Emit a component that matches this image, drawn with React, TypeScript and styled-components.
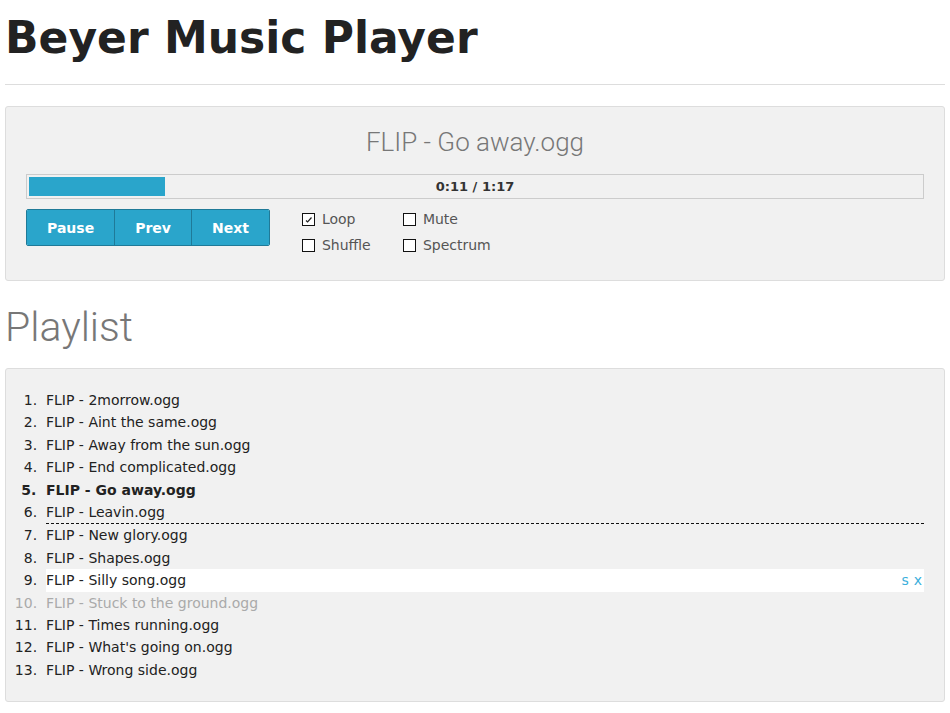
import React from "react";
import styled, { createGlobalStyle } from "styled-components";

const GlobalStyle = createGlobalStyle`
  html, body { margin: 0; padding: 0; background: #fff; }
  body { font-family: "DejaVu Sans", "Noto Sans", sans-serif; color: #222; }
`;

const Page = styled.div`
  padding: 0 5px 12px;
`;

const Title = styled.h1`
  margin: 14px 0 0;
  font-size: 44px;
  line-height: 48px;
  font-weight: bold;
  color: #222;
`;

const Divider = styled.hr`
  border: 0;
  border-top: 1px solid #ddd;
  margin: 22px 0 21px;
`;

const Panel = styled.section`
  background: #f1f1f1;
  border: 1px solid #ddd;
  border-radius: 3px;
  padding: 20px;
`;

const SongTitle = styled.div`
  text-align: center;
  font-family: Roboto, "DejaVu Sans", sans-serif;
  font-size: 26px;
  font-weight: 300;
  line-height: 30px;
  color: #777;
  margin-bottom: 17px;
`;

const Track = styled.div`
  border: 1px solid #ccc;
  padding: 2px;
  display: grid;
  height: 19px;
`;

const Fill = styled.div`
  grid-area: 1 / 1;
  height: 19px;
  background: #2aa5cb;
`;

const Time = styled.div`
  grid-area: 1 / 1;
  text-align: center;
  font-size: 13px;
  font-weight: bold;
  line-height: 19px;
  color: #333;
`;

const Controls = styled.div`
  display: flex;
  align-items: flex-start;
  gap: 32px;
  margin-top: 10px;
`;

const ButtonGroup = styled.div`
  display: flex;
  border: 1px solid #1f7a98;
  border-radius: 2px;
  overflow: hidden;
`;

const Button = styled.button`
  height: 35px;
  padding: 0 20px;
  border: 0;
  background: #2aa5cb;
  color: #fff;
  font-family: "DejaVu Sans", sans-serif;
  font-weight: bold;
  font-size: 14px;
  cursor: pointer;
  & + & {
    border-left: 1px solid #1f7a98;
  }
`;

const Checks = styled.div`
  display: grid;
  grid-template-columns: 101px auto;
  row-gap: 6px;
  padding-bottom: 5px;
`;

const CheckLabel = styled.label`
  display: flex;
  align-items: center;
  height: 20px;
  font-size: 14px;
  color: #555;
`;

const Box = styled.span`
  box-sizing: border-box;
  width: 13px;
  height: 13px;
  border: 1px solid #111;
  background: #fff;
  margin-right: 7px;
  display: flex;
  align-items: center;
  justify-content: center;
`;

const Heading = styled.h2`
  margin: 24px 0 19px;
  font-family: Roboto, "DejaVu Sans", sans-serif;
  font-size: 41px;
  line-height: 44px;
  font-weight: 300;
  color: #777;
`;

const List = styled.ol`
  margin: 0;
  padding: 0 0 0 20px;
`;

const Item = styled.li<{ $state?: "playing" | "disabled" | "hover" | "drop" }>`
  font-size: 14px;
  line-height: 22.4px;
  color: ${(p) => (p.$state === "disabled" ? "#aaa" : "#222")};
  font-weight: ${(p) => (p.$state === "playing" ? "bold" : "normal")};
  background: ${(p) => (p.$state === "hover" ? "#fff" : "transparent")};
  border-bottom: ${(p) => (p.$state === "drop" ? "1px dashed #111" : "0")};
  &::marker {
    content: counter(list-item) ".\\00a0\\00a0";
  }
`;

const Row = styled.span`
  display: flex;
  justify-content: space-between;
`;

const Actions = styled.span`
  display: flex;
  gap: 5px;
  padding-right: 2px;
  font-size: 14px;
  color: #3cb0dc;
`;

const songs = [
  "FLIP - 2morrow.ogg",
  "FLIP - Aint the same.ogg",
  "FLIP - Away from the sun.ogg",
  "FLIP - End complicated.ogg",
  "FLIP - Go away.ogg",
  "FLIP - Leavin.ogg",
  "FLIP - New glory.ogg",
  "FLIP - Shapes.ogg",
  "FLIP - Silly song.ogg",
  "FLIP - Stuck to the ground.ogg",
  "FLIP - Times running.ogg",
  "FLIP - What's going on.ogg",
  "FLIP - Wrong side.ogg",
];

const states: Record<number, "playing" | "disabled" | "hover" | "drop"> = {
  4: "playing",
  5: "drop",
  8: "hover",
  9: "disabled",
};

const Check = ({ checked, label }: { checked?: boolean; label: string }) => (
  <CheckLabel>
    <Box>
      {checked && (
        <svg width="9" height="9" viewBox="0 0 9 9">
          <path d="M2 5.5 L3.6 7 L7.5 2.5" fill="none" stroke="#222" strokeWidth="1.2" />
        </svg>
      )}
    </Box>
    {label}
  </CheckLabel>
);

export default function App() {
  const current = 11;
  const total = 77;
  const pct = (current / total) * 100 + 1;
  return (
    <Page>
      <GlobalStyle />
      <Title>Beyer Music Player</Title>
      <Divider />
      <Panel>
        <SongTitle>FLIP - Go away.ogg</SongTitle>
        <Track>
          <Fill style={{ width: `${pct}%` }} />
          <Time>0:11 / 1:17</Time>
        </Track>
        <Controls>
          <ButtonGroup>
            <Button>Pause</Button>
            <Button>Prev</Button>
            <Button>Next</Button>
          </ButtonGroup>
          <Checks>
            <Check checked label="Loop" />
            <Check label="Mute" />
            <Check label="Shuffle" />
            <Check label="Spectrum" />
          </Checks>
        </Controls>
      </Panel>
      <Heading>Playlist</Heading>
      <Panel>
        <List>
          {songs.map((s, i) => (
            <Item key={s} $state={states[i]}>
              <Row>
                <span>{s}</span>
                {states[i] === "hover" && (
                  <Actions>
                    <span>s</span>
                    <span>x</span>
                  </Actions>
                )}
              </Row>
            </Item>
          ))}
        </List>
      </Panel>
    </Page>
  );
}
